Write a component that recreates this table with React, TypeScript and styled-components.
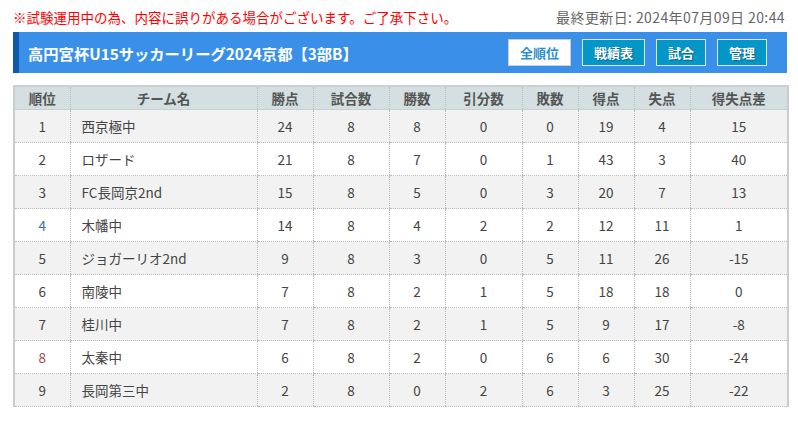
import React from 'react';
import styled, { createGlobalStyle } from 'styled-components';

const GlobalStyle = createGlobalStyle`
  body {
    margin: 0;
    background: #fff;
    font-family: "Noto Sans CJK JP", "Noto Sans", sans-serif;
    color: #444;
  }
`;

const Page = styled.div`
  padding: 7px 11px 0 13px;
`;

const TopLine = styled.div`
  display: flex;
  justify-content: space-between;
  align-items: center;
  height: 19px;
`;

const Notice = styled.span`
  color: #f00;
  font-size: 13.5px;
`;

const Updated = styled.span`
  color: #666;
  font-size: 14px;
  letter-spacing: 0.4px;
  padding-right: 2px;
`;

const TitleBar = styled.div`
  margin-top: 6px;
  height: 41px;
  display: flex;
  align-items: center;
  justify-content: space-between;
  background: #3a90e8;
  border-left: 6px solid #0e5aa6;
  padding: 0 20px 0 9px;
`;

const Title = styled.h1`
  margin: 0;
  font-size: 15.3px;
  font-weight: 700;
  color: #fff;
`;

const Nav = styled.div`
  display: flex;
  gap: 11px;
`;

const NavButton = styled.a<{ $active?: boolean }>`
  display: flex;
  align-items: center;
  justify-content: center;
  height: 27px;
  padding: 0 11px;
  box-sizing: border-box;
  border: 1px solid ${p => (p.$active ? '#ccc' : '#d8e8f0')};
  background: ${p => (p.$active ? '#fff' : '#0596c8')};
  color: ${p => (p.$active ? '#2b8fd0' : '#fff')};
  font-size: 13px;
  font-weight: 700;
  text-shadow: ${p => (p.$active ? 'none' : '1px 1px 1px rgba(0,0,0,0.35)')};
  cursor: pointer;
`;

const Table = styled.table`
  margin-top: 12px;
  width: 774px;
  table-layout: fixed;
  border-collapse: collapse;
  border-left: 2px solid #ccc;
  border-right: 2px solid #ccc;
  font-size: 13.5px;
`;

const HeadCell = styled.th`
  height: 22px;
  background: #d3dfe0;
  color: #555;
  font-weight: 700;
  border-top: 2px solid #c8d0d2;
  border-bottom: 1px solid #c8d0d2;
  border-left: 1px dotted #bbb;
  padding: 0;
`;

const Row = styled.tr<{ $odd: boolean }>`
  background: ${p => (p.$odd ? '#f2f2f2' : '#fff')};
`;

const Cell = styled.td<{ $left?: boolean; $color?: string }>`
  height: 32px;
  padding: 0 ${p => (p.$left ? '11px' : '0')};
  text-align: ${p => (p.$left ? 'left' : 'center')};
  color: ${p => p.$color || '#444'};
  border-left: 1px dotted #bbb;
  border-bottom: 1px dotted #bbb;
`;

const widths = [56, 187, 56, 76, 56, 77, 56, 56, 56, 98];
const heads = ['順位', 'チーム名', '勝点', '試合数', '勝数', '引分数', '敗数', '得点', '失点', '得失点差'];

const rows: [number, string, number, number, number, number, number, number, number, number][] = [
  [1, '西京極中', 24, 8, 8, 0, 0, 19, 4, 15],
  [2, 'ロザード', 21, 8, 7, 0, 1, 43, 3, 40],
  [3, 'FC長岡京2nd', 15, 8, 5, 0, 3, 20, 7, 13],
  [4, '木幡中', 14, 8, 4, 2, 2, 12, 11, 1],
  [5, 'ジョガーリオ2nd', 9, 8, 3, 0, 5, 11, 26, -15],
  [6, '南陵中', 7, 8, 2, 1, 5, 18, 18, 0],
  [7, '桂川中', 7, 8, 2, 1, 5, 9, 17, -8],
  [8, '太秦中', 6, 8, 2, 0, 6, 6, 30, -24],
  [9, '長岡第三中', 2, 8, 0, 2, 6, 3, 25, -22],
];

const rankColor = (r: number) => (r === 4 ? '#3a6fae' : r === 8 ? '#a0504a' : '#444');

export default function App() {
  return (
    <Page>
      <GlobalStyle />
      <TopLine>
        <Notice>※試験運用中の為、内容に誤りがある場合がございます。ご了承下さい。</Notice>
        <Updated>最終更新日: 2024年07月09日 20:44</Updated>
      </TopLine>
      <TitleBar>
        <Title>高円宮杯U15サッカーリーグ2024京都【3部B】</Title>
        <Nav>
          <NavButton $active>全順位</NavButton>
          <NavButton>戦績表</NavButton>
          <NavButton>試合</NavButton>
          <NavButton>管理</NavButton>
        </Nav>
      </TitleBar>
      <Table>
        <colgroup>
          {widths.map((w, i) => (
            <col key={i} style={{ width: w }} />
          ))}
        </colgroup>
        <thead>
          <tr>
            {heads.map(h => (
              <HeadCell key={h}>{h}</HeadCell>
            ))}
          </tr>
        </thead>
        <tbody>
          {rows.map((r, i) => (
            <Row key={r[0]} $odd={i % 2 === 0}>
              {r.map((v, j) => (
                <Cell key={j} $left={j === 1} $color={j === 0 ? rankColor(r[0]) : undefined}>
                  {v}
                </Cell>
              ))}
            </Row>
          ))}
        </tbody>
      </Table>
    </Page>
  );
}
